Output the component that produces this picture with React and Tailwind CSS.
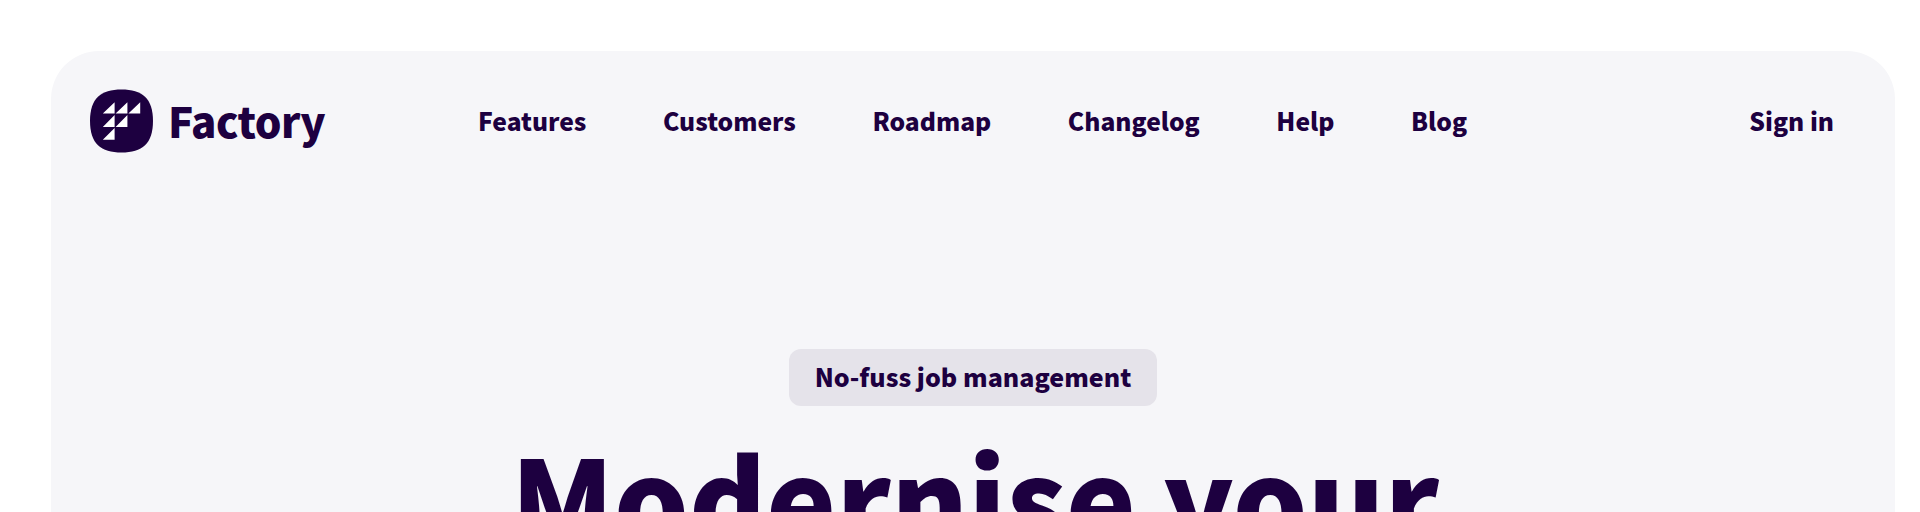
const font = { fontFamily: '"Noto Sans CJK SC", "Noto Sans", sans-serif' };

function Logo() {
  return (
    <svg width="63" height="64" viewBox="0 0 64 64" className="shrink-0">
      <path d="M32 0C53 0 64 9 64 32C64 55 53 64 32 64C11 64 0 55 0 32C0 9 11 0 32 0Z" fill="#1d0040" />
      <path d="M13 24.5L25 13V24.5ZM26 24.5L38 13V24.5ZM39 24.5L51 13V24.5ZM13 38L25 26V38ZM26 38L38 26V38ZM13 51L25 39V51Z" fill="#ffffff" />
    </svg>
  );
}

export default function App() {
  const links = ["Features", "Customers", "Roadmap", "Changelog", "Help", "Blog"];
  return (
    <div className="h-[512px] overflow-hidden bg-white pt-[51px] pl-[51px] pr-[25px]" style={font}>
      <div className="h-[600px] rounded-[48px] bg-[#f6f6f9] text-[#1d0040]">
        <header className="flex items-center pl-[39px] pr-[61px] pt-[38px]">
          <div className="flex w-[388px] items-center gap-[15px]">
            <Logo />
            <span className="mb-[2px] text-[42px] leading-[62px] font-black tracking-[-0.5px]">Factory</span>
          </div>
          <nav className="mb-[2px] flex items-center gap-[76.6px] text-[24.6px] leading-[62px] font-black">
            {links.map((l) => <a key={l}>{l}</a>)}
          </nav>
          <a className="mb-[2px] ml-auto text-[24.6px] leading-[62px] font-black">Sign in</a>
        </header>
        <main className="flex flex-col items-center pt-[196px]">
          <div className="flex h-[57px] items-center rounded-[12px] bg-[#e5e3ea] px-[26px] pb-[2px] text-[25px] font-black">No-fuss job management</div>
          <h1 className="mt-[20px] ml-[4px] text-[117.6px] leading-[140px] font-black">Modernise your</h1>
        </main>
      </div>
    </div>
  );
}
